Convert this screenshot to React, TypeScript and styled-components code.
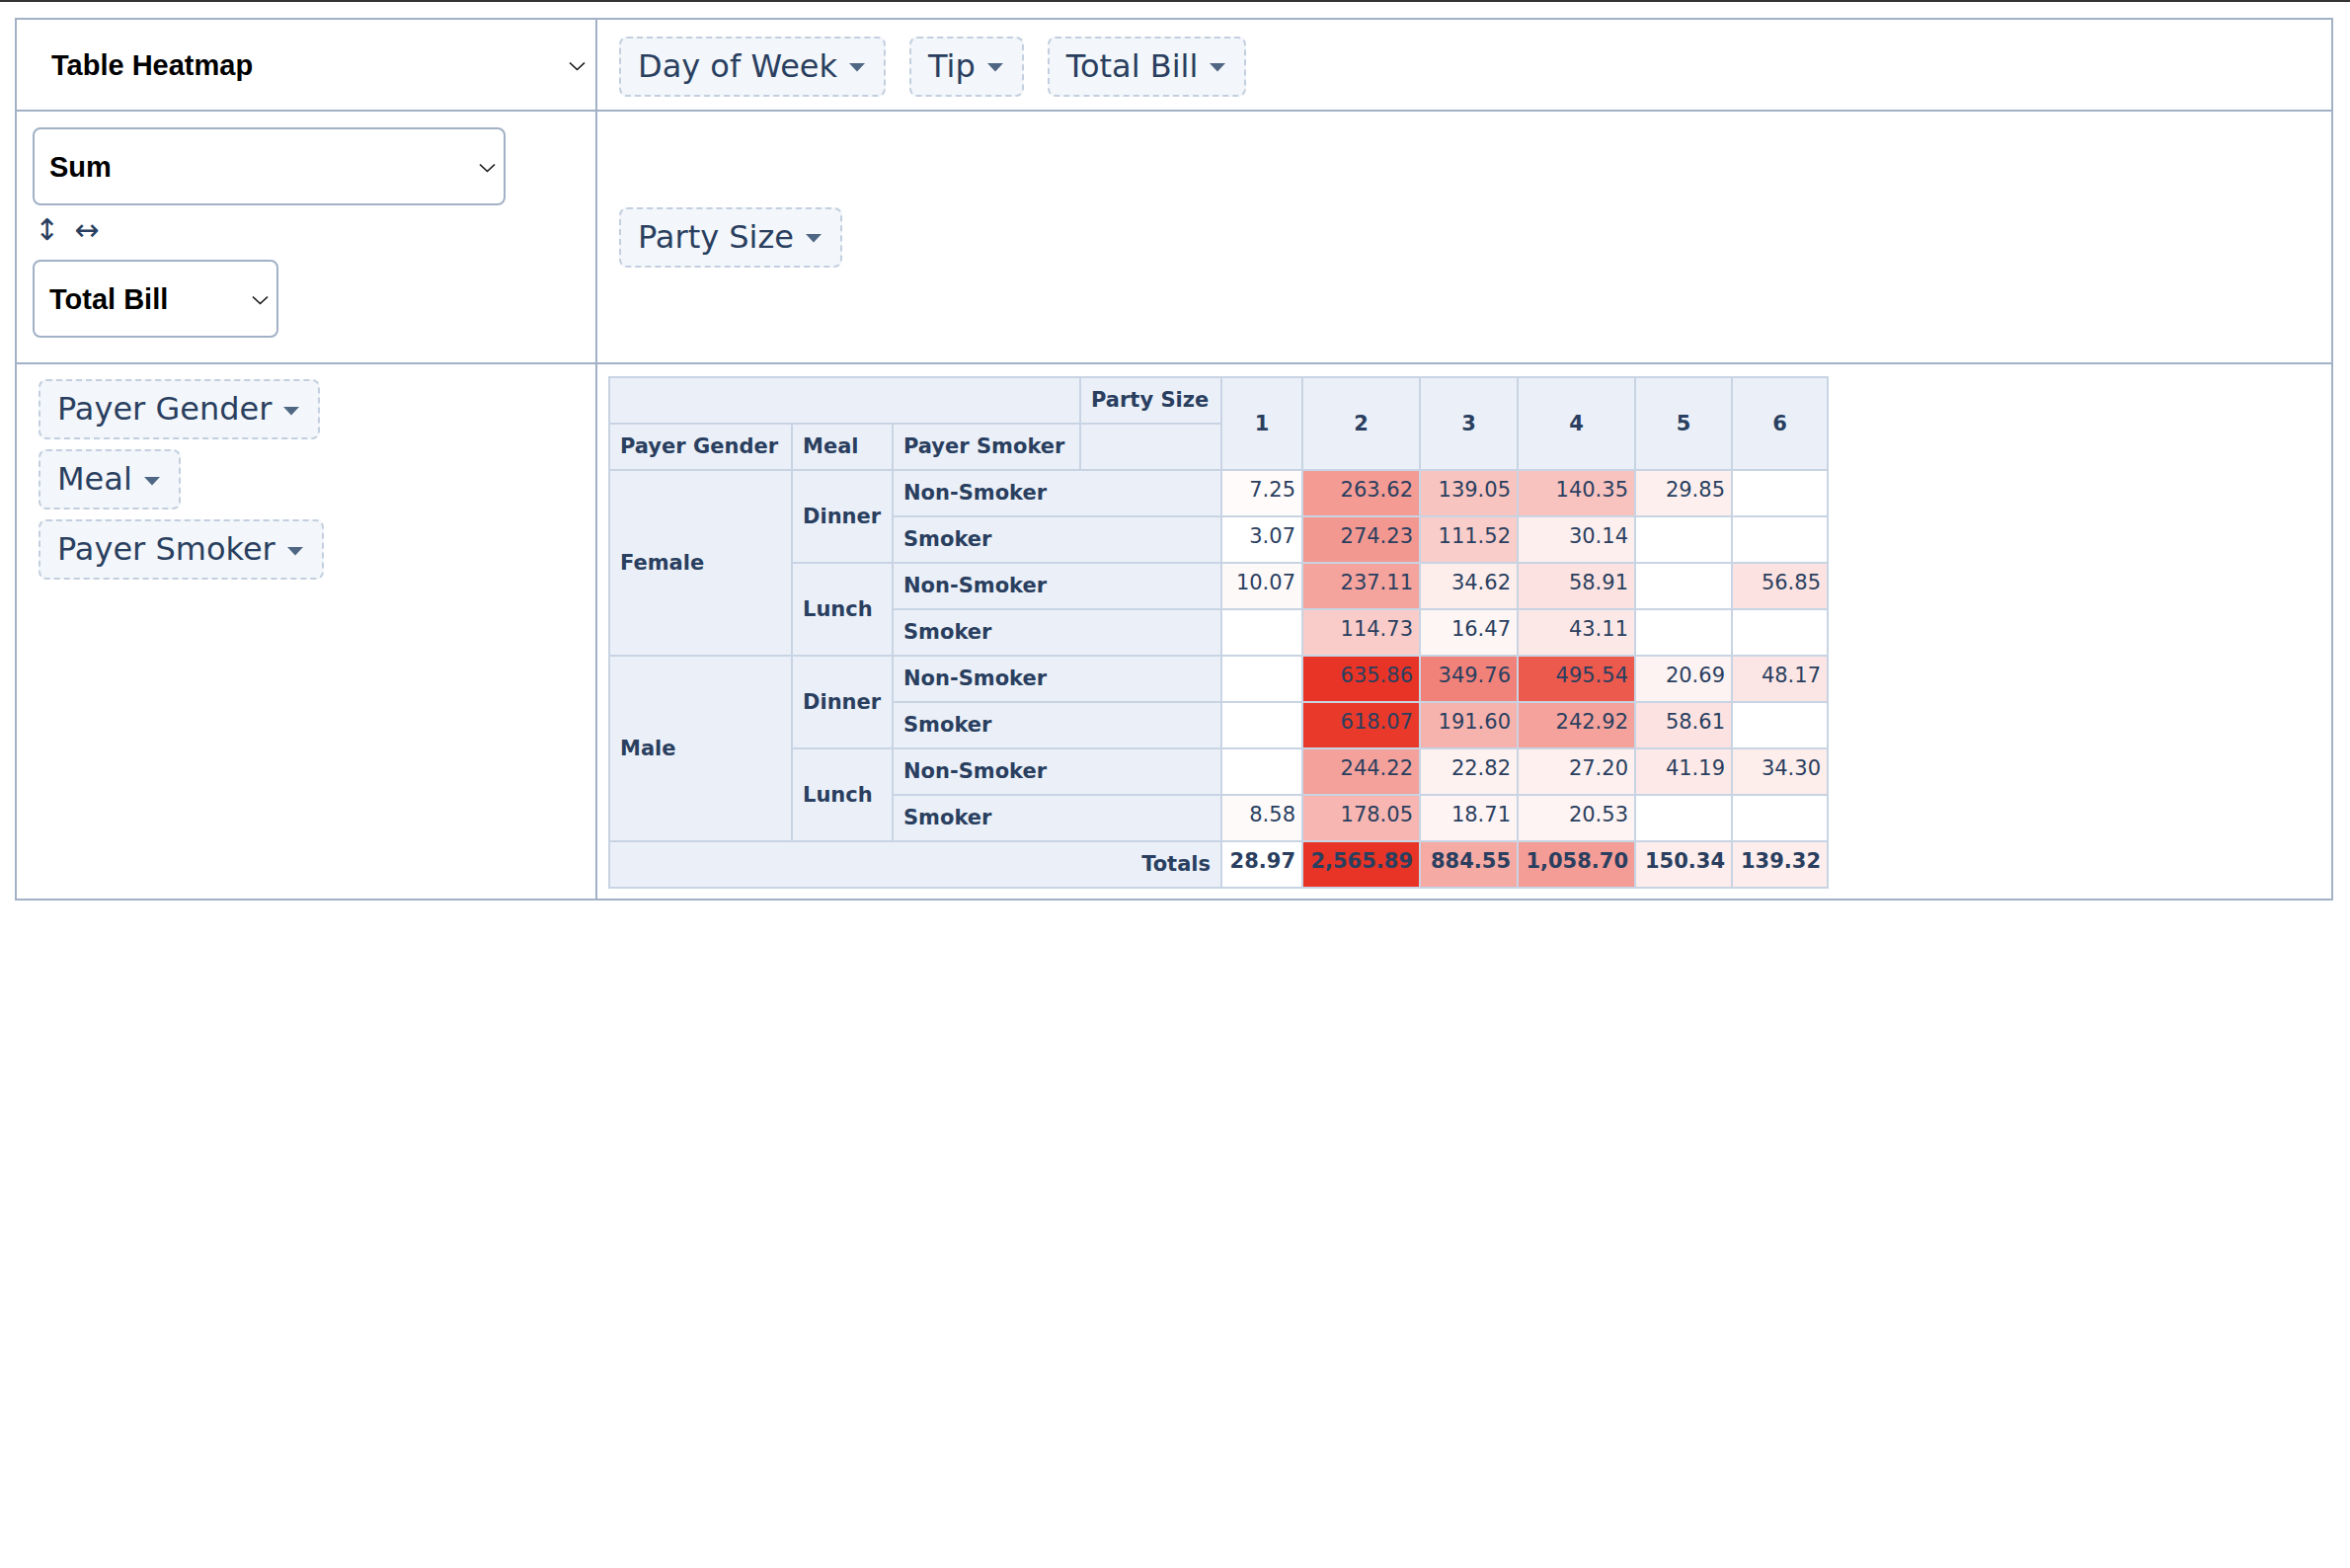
import React from "react";
import styled, { createGlobalStyle } from "styled-components";

const GlobalStyle = createGlobalStyle`
   html, body {
      margin: 0;
      padding: 0;
      background: #ffffff;
   }
`;

type Cell = number | null;

interface PivotRow {
   gender: string;
   meal: string;
   smoker: string;
   values: Cell[];
}

const partySizes = [1, 2, 3, 4, 5, 6];
const columnWidths = [185, 102, 190, 143, 82, 119, 99, 119, 98, 97];

const rows: PivotRow[] = [
   { gender: "Female", meal: "Dinner", smoker: "Non-Smoker", values: [7.25, 263.62, 139.05, 140.35, 29.85, null] },
   { gender: "Female", meal: "Dinner", smoker: "Smoker", values: [3.07, 274.23, 111.52, 30.14, null, null] },
   { gender: "Female", meal: "Lunch", smoker: "Non-Smoker", values: [10.07, 237.11, 34.62, 58.91, null, 56.85] },
   { gender: "Female", meal: "Lunch", smoker: "Smoker", values: [null, 114.73, 16.47, 43.11, null, null] },
   { gender: "Male", meal: "Dinner", smoker: "Non-Smoker", values: [null, 635.86, 349.76, 495.54, 20.69, 48.17] },
   { gender: "Male", meal: "Dinner", smoker: "Smoker", values: [null, 618.07, 191.6, 242.92, 58.61, null] },
   { gender: "Male", meal: "Lunch", smoker: "Non-Smoker", values: [null, 244.22, 22.82, 27.2, 41.19, 34.3] },
   { gender: "Male", meal: "Lunch", smoker: "Smoker", values: [8.58, 178.05, 18.71, 20.53, null, null] },
];

const totals = partySizes.map((_, c) =>
   rows.reduce((sum, r) => sum + (r.values[c] ?? 0), 0)
);

const fmt = (v: number) =>
   v.toLocaleString("en-US", { minimumFractionDigits: 2, maximumFractionDigits: 2 });

// white -> red, slightly eased so the middle values come out a bit darker
const heatScale = (values: number[]) => {
   const min = Math.min(...values);
   const max = Math.max(...values);
   return (v: number) => {
      const t = Math.pow((v - min) / (max - min), 0.8);
      const mix = (to: number) => Math.round(255 - (255 - to) * t);
      return `rgb(${mix(232)}, ${mix(52)}, ${mix(38)})`;
   };
};

const bodyColor = heatScale(
   rows.flatMap((r) => r.values.filter((v): v is number => v !== null))
);
const totalColor = heatScale(totals);

function Chevron() {
   return (
      <svg width="17" height="10" viewBox="0 0 17 10" fill="none">
         <polyline points="1,1.5 8.5,8.5 16,1.5" stroke="#111" strokeWidth="1.6" />
      </svg>
   );
}

function Pill({ label }: { label: string }) {
   return (
      <Attr>
         {label}
         <Triangle width="18" height="10" viewBox="0 0 18 10">
            <polygon points="1,1 17,1 9,9.5" fill="#506784" />
         </Triangle>
      </Attr>
   );
}

function App() {
   return (
      <>
         <GlobalStyle />
         <TopRule />
         <Page>
            <Frame>
               <RendererCell>
                  <RendererSelect>
                     <span>Table Heatmap</span>
                     <Chevron />
                  </RendererSelect>
               </RendererCell>
               <UnusedCell>
                  <Pill label="Day of Week" />
                  <Pill label="Tip" />
                  <Pill label="Total Bill" />
               </UnusedCell>

               <ValsCell>
                  <ValueSelect $width={479}>
                     <span>Sum</span>
                     <Chevron />
                  </ValueSelect>
                  <OrderRow>
                     <OrderLink>↕</OrderLink>
                     <OrderLink>↔</OrderLink>
                  </OrderRow>
                  <ValueSelect $width={249}>
                     <span>Total Bill</span>
                     <Chevron />
                  </ValueSelect>
               </ValsCell>
               <ColsCell>
                  <Pill label="Party Size" />
               </ColsCell>

               <RowsCell>
                  <Pill label="Payer Gender" />
                  <Pill label="Meal" />
                  <Pill label="Payer Smoker" />
               </RowsCell>
               <OutputCell>
                  <PivotTable>
                     <colgroup>
                        {columnWidths.map((w, i) => (
                           <col key={i} style={{ width: w }} />
                        ))}
                     </colgroup>
                     <thead>
                        <tr>
                           <Head colSpan={3} />
                           <Head>Party Size</Head>
                           {partySizes.map((n) => (
                              <Head key={n} rowSpan={2} $align="center">
                                 {n}
                              </Head>
                           ))}
                        </tr>
                        <tr>
                           <Head>Payer Gender</Head>
                           <Head>Meal</Head>
                           <Head>Payer Smoker</Head>
                           <Head />
                        </tr>
                     </thead>
                     <tbody>
                        {rows.map((r, i) => (
                           <tr key={i}>
                              {i % 4 === 0 && <Head rowSpan={4}>{r.gender}</Head>}
                              {i % 2 === 0 && <Head rowSpan={2}>{r.meal}</Head>}
                              <Head colSpan={2}>{r.smoker}</Head>
                              {r.values.map((v, c) => (
                                 <Value
                                    key={c}
                                    style={v !== null ? { backgroundColor: bodyColor(v) } : undefined}
                                 >
                                    {v !== null ? fmt(v) : ""}
                                 </Value>
                              ))}
                           </tr>
                        ))}
                        <tr>
                           <Head colSpan={4} $align="right">
                              Totals
                           </Head>
                           {totals.map((v, c) => (
                              <Value key={c} $bold style={{ backgroundColor: totalColor(v) }}>
                                 {fmt(v)}
                              </Value>
                           ))}
                        </tr>
                     </tbody>
                  </PivotTable>
               </OutputCell>
            </Frame>
         </Page>
      </>
   );
}

export default App;

const TopRule = styled.div`
   height: 2px;
   background: #333333;
`;

const Page = styled.div`
   padding: 16px 17px 0 15px;
`;

const Frame = styled.div`
   display: grid;
   grid-template-columns: 586px 1fr;
   grid-template-rows: 91px 254px 541px;
   gap: 2px;
   padding: 2px;
   background: #a2b1c6;
   color: #2a3f5f;
   font-family: "DejaVu Sans", Verdana, sans-serif;
`;

const Section = styled.div`
   background: #ffffff;
   box-sizing: border-box;
   min-width: 0;
`;

const RendererCell = styled(Section)`
   display: flex;
   align-items: stretch;
`;

const RendererSelect = styled.div`
   flex: 1;
   display: flex;
   align-items: center;
   justify-content: space-between;
   padding: 2px 10px 0 35px;
   font-family: "Liberation Sans", Arial, sans-serif;
   font-weight: bold;
   font-size: 29px;
   color: #000;
`;

const UnusedCell = styled(Section)`
   display: flex;
   align-items: center;
   gap: 24px;
   padding: 3px 22px 0;
`;

const ValsCell = styled(Section)`
   display: flex;
   flex-direction: column;
   align-items: flex-start;
   padding: 16px;
`;

const ValueSelect = styled.div<{ $width: number }>`
   width: ${(p) => p.$width}px;
   height: 79px;
   box-sizing: border-box;
   display: flex;
   align-items: center;
   justify-content: space-between;
   padding: 2px 8px 0 15px;
   border: 2px solid #a2b1c6;
   border-radius: 8px;
   font-family: "Liberation Sans", Arial, sans-serif;
   font-weight: bold;
   font-size: 29px;
   color: #000;
`;

const OrderRow = styled.div`
   display: flex;
   gap: 15px;
   margin: 14px 0 19px 2px;
   height: 22px;
   align-items: center;
`;

const OrderLink = styled.a`
   font-size: 30px;
   line-height: 22px;
   color: #2a3f5f;
   cursor: pointer;
`;

const ColsCell = styled(Section)`
   display: flex;
   align-items: center;
   padding: 0 22px;
`;

const RowsCell = styled(Section)`
   display: flex;
   flex-direction: column;
   align-items: flex-start;
   gap: 10px;
   padding: 15px 22px;
`;

const OutputCell = styled(Section)`
   padding: 12px 11px;
`;

const Attr = styled.span`
   display: inline-flex;
   align-items: center;
   white-space: nowrap;
   padding: 10px 18px 10px 17px;
   line-height: 37px;
   font-size: 32px;
   color: #2a3f5f;
   background: #f3f6fa;
   border: 2px dashed #c3cfdf;
   border-radius: 8px;
   cursor: move;
`;

const Triangle = styled.svg`
   margin-left: 11px;
   margin-top: 2px;
`;

const PivotTable = styled.table`
   table-layout: fixed;
   width: 1236px;
   border-collapse: collapse;
   font-family: "DejaVu Sans", Verdana, sans-serif;
   font-size: 21px;
   line-height: 25px;
   text-align: left;
   color: #2a3f5f;
`;

const Head = styled.th<{ $align?: "left" | "center" | "right" }>`
   background: #ebf0f8;
   border: 2px solid #c8d4e3;
   padding: 10px;
   font-weight: bold;
   white-space: nowrap;
   vertical-align: middle;
   text-align: ${(p) => p.$align ?? "left"};
`;

const Value = styled.td<{ $bold?: boolean }>`
   background: #ffffff;
   border: 2px solid #c8d4e3;
   padding: 7px 6px 13px;
   vertical-align: top;
   text-align: right;
   white-space: nowrap;
   font-weight: ${(p) => (p.$bold ? "bold" : "normal")};
`;
